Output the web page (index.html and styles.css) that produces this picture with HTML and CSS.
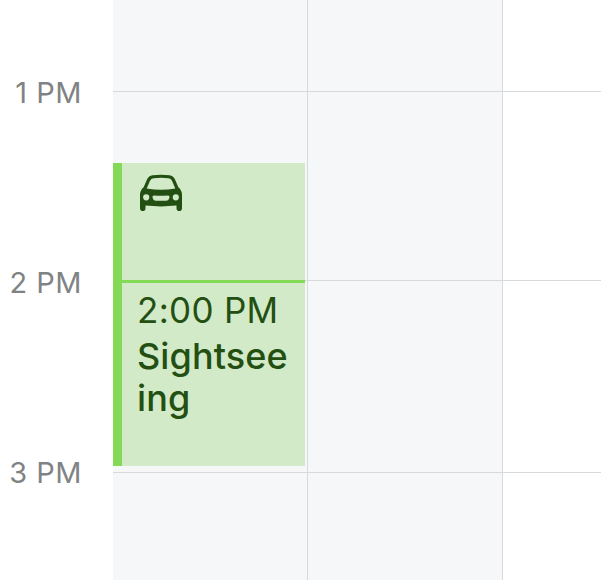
FILE: index.html
```html
<!DOCTYPE html>
<html lang="en">
<head>
  <meta charset="UTF-8">
  <meta name="viewport" content="width=device-width, initial-scale=1.0">
  <title>Calendar</title>
  <link rel="stylesheet" href="styles.css">
</head>

<body>

  <div class="calendar">
    <!-- Hour labels -->
    <div class="hours">
      <div class="hour-label">1 PM</div>
      <div class="hour-label">2 PM</div>
      <div class="hour-label">3 PM</div>
    </div>

    <!-- Day columns -->
    <div class="day weekend">
      <div class="slot"></div>
      <div class="slot"></div>
      <div class="slot"></div>

      <div class="event">
        <div class="travel-time">
          <svg class="car-icon" width="44" height="38" viewBox="0 0 44 38">
            <path fill="currentColor" fill-rule="evenodd" d="M13.500 1.200Q22 .4 30.500 1.200Q34.300 1.700 35.900 5.200L39.400 13.200Q43 16.200 43 21V34.200Q43 37 40.200 37Q37.500 37 37.500 34.200V31.600Q22 33.200 6.500 31.600V34.200Q6.500 37 3.800 37Q1 37 1 34.200V21Q1 16.200 4.600 13.200L8.100 5.200Q9.700 1.700 13.500 1.200ZM14.500 4.200Q12 4.500 10.900 7L7.700 14.500Q22 16.900 36.300 14.500L33.100 7Q32 4.500 29.500 4.200Q22 3.500 14.500 4.200ZM7.200 20.200A3.100 3.100 0 1 0 7.200 26.400A3.100 3.100 0 1 0 7.200 20.200ZM36.800 20.200A3.100 3.100 0 1 0 36.800 26.400A3.100 3.100 0 1 0 36.800 20.200ZM14.800 21.500Q13.300 21.500 13.500 23.100Q13.900 26.800 17 26.800H27Q30.100 26.800 30.500 23.100Q30.700 21.500 29.200 21.500Q22 22.100 14.800 21.500Z"/>
          </svg>
        </div>
        <div class="event-body">
          <div class="event-time">2:00 PM</div>
          <div class="event-title">Sightseeing</div>
        </div>
      </div>
    </div>

    <div class="day weekend">
      <div class="slot"></div>
      <div class="slot"></div>
      <div class="slot"></div>
    </div>

    <div class="day">
      <div class="slot"></div>
      <div class="slot"></div>
      <div class="slot"></div>
    </div>
  </div>

</body>
</html>
```

FILE: styles.css
```css
/* Global Styles */
* {
  box-sizing: border-box;
}

body {
  margin: 0;
  font-family: Inter, "Liberation Sans", sans-serif;
  background-color: #fff;
  overflow: hidden;
}

.calendar {
  display: grid;
  grid-template-columns: 113px 195px 195px 1fr;
  height: 580px;
}

/* Hour Labels */
.hours {
  display: grid;
  grid-auto-rows: 190px;
  padding: 73px 31px 0 0;
  overflow: hidden;
}

.hour-label {
  font-size: 29px;
  line-height: 40px;
  letter-spacing: 0.5px;
  color: #808384;
  text-align: right;
  white-space: nowrap;
}

/* Day Columns */
.day {
  position: relative;
  display: grid;
  grid-template-rows: 92px 189px 192px;
}

.weekend {
  background-color: #f5f7f9;
  border-right: 1px solid #d7d9db;
}

.slot {
  border-bottom: 1px solid #d7d9db;
}

/* Event */
.event {
  position: absolute;
  top: 163px;
  left: 0;
  width: 192px;
  height: 303px;
  border-left: 9px solid #84d957;
  background-color: #d3eac8;
  color: #235012;
}

.travel-time {
  height: 120px;
  padding: 11px 0 0 17px;
  border-bottom: 3px solid #84d957;
}

.car-icon {
  display: block;
}

.event-body {
  padding: 6px 15px 0;
}

.event-time {
  font-size: 35px;
  line-height: 42px;
  letter-spacing: 0.3px;
  white-space: nowrap;
}

.event-title {
  margin-top: 4px;
  font-size: 36px;
  font-weight: 500;
  line-height: 42px;
  letter-spacing: 0.1px;
  word-break: break-all;
}
```
